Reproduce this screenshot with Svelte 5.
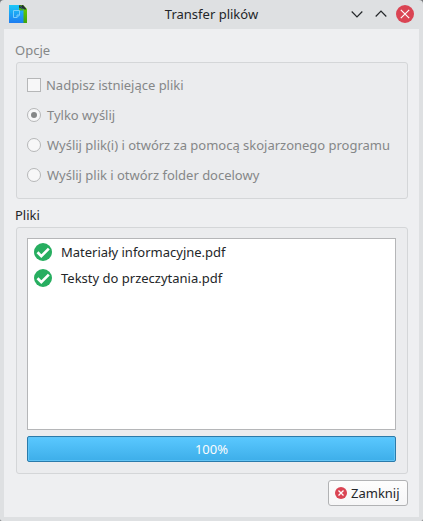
<script>
  const modes = [
    { label: 'Tylko wyślij', selected: true },
    { label: 'Wyślij plik(i) i otwórz za pomocą skojarzonego programu', selected: false },
    { label: 'Wyślij plik i otwórz folder docelowy', selected: false }
  ];
  const files = ['Materiały informacyjne.pdf', 'Teksty do przeczytania.pdf'];
  const progress = 100;
</script>

<div class="window">
  <header>
    <svg class="app" width="18" height="18" viewBox="0 0 18 18">
      <defs>
        <linearGradient id="blue" x1="0" y1="0" x2="0" y2="1">
          <stop offset="0" stop-color="#1bc8f8" />
          <stop offset="1" stop-color="#1d7cf0" />
        </linearGradient>
        <linearGradient id="green" x1="0" y1="0" x2="0" y2="1">
          <stop offset="0" stop-color="#6fd400" />
          <stop offset="1" stop-color="#3fa60a" />
        </linearGradient>
      </defs>
      <path d="M10 0h4l4 4v14h-8z" fill="url(#green)" />
      <path d="M10 0h4l3 3.500v1h-1.500l-1.500-1v1.500z" fill="#263034" />
      <path d="M11 0h2l-.5 1.500z" fill="#58ae0c" />
      <path d="M0 0h10l4.500 4.500V18H0z" fill="url(#blue)" />
      <path d="M10 0l4.500 4.500H10z" fill="#263b42" />
      <path d="M10 2.500l4.500 2v1H10z" fill="#4cae22" />
      <path d="M4.500 5.500h6v4.500l-2.500 2.500H4.500zM8 12.500V10h2.500" fill="none" stroke="#79cdfb" stroke-width="1" />
    </svg>
    <h1>Transfer plików</h1>
    <div class="controls">
      <svg width="14" height="18" viewBox="0 0 14 18"><path d="M1.700 6.500L7 11.800l5.300-5.300" /></svg>
      <svg width="14" height="18" viewBox="0 0 14 18"><path d="M1.700 11.500L7 6.200l5.300 5.300" /></svg>
      <svg width="18" height="18" viewBox="0 0 18 18">
        <circle cx="9" cy="9" r="9" fill="#da4453" />
        <path class="light" d="M4.800 4.800l8.400 8.400M13.200 4.800l-8.400 8.400" />
      </svg>
    </div>
  </header>

  <main>
    <h2 class="muted">Opcje</h2>
    <section class="group options">
      <div class="option first"><span class="check"></span><span>Nadpisz istniejące pliki</span></div>
      {#each modes as mode}
        <div class="option"><span class="radio" class:selected={mode.selected}></span><span>{mode.label}</span></div>
      {/each}
    </section>

    <h2 class="files-title">Pliki</h2>
    <section class="group files">
      <ul>
        {#each files as file}
          <li>
            <svg width="18" height="18" viewBox="0 0 18 18">
              <circle cx="9" cy="9" r="9" fill="#27ae60" />
              <path d="M3.500 9.300l3.800 3.800 7.500-7.500" fill="none" stroke="#fff" stroke-width="2.700" />
            </svg>
            <span>{file}</span>
          </li>
        {/each}
      </ul>
      <div class="progress"><div class="fill" style:width="{progress}%">{progress}%</div></div>
    </section>

    <button>
      <svg width="12" height="12" viewBox="0 0 12 12">
        <circle cx="6" cy="6" r="6" fill="#da4453" />
        <path d="M3.500 3.500l5 5M8.500 3.500l-5 5" stroke="#fff" stroke-width="1.300" />
      </svg>
      <span>Zamknij</span>
    </button>
  </main>
</div>

<style>
  :global(body) { background: #747679; }
  .window {
    width: 423px; height: 521px; box-sizing: border-box;
    padding: 0 4px 4px; border-radius: 4px 4px 2px 2px; background: #dee0e2;
    font: 13px/18px "Noto Sans", sans-serif; color: #232629;
    display: flex; flex-direction: column;
  }
  header { height: 29px; display: grid; grid-template-columns: 70px 1fr 70px; align-items: center; }
  .app { margin-left: 5px; margin-top: -1px; display: block; }
  h1, h2 { font: inherit; margin: 0; }
  h1 { text-align: center; margin-top: -1px; }
  .controls { display: flex; gap: 10px; justify-content: flex-end; padding-right: 5px; margin-top: -1px; }
  .controls svg:nth-child(2) { margin-right: -2px; }
  .controls path { fill: none; stroke: #232629; stroke-width: 1.2; }
  .controls .light { stroke: #fcfcfc; }
  main {
    flex: 1; box-sizing: border-box; background: #eeeff1; padding: 12px 11px 11px 12px;
    display: flex; flex-direction: column;
  }
  h2 { height: 21px; margin-left: -1px; }
  .muted, .options { color: #858788; }
  .files-title { margin-top: 7px; }
  .group { box-sizing: border-box; background: #ebecee; border: 1px solid #d4d6d8; border-radius: 3px; width: 392px; }
  .options { height: 137px; padding: 7px 10px; }
  .option { height: 30px; display: flex; align-items: center; gap: 6px; white-space: nowrap; letter-spacing: -.01px; }
  .option.first { gap: 5px; }
  .check, .radio { flex: none; width: 14px; height: 14px; box-sizing: border-box; border: 1px solid #b6b7b8; background: #f7f7f8; }
  .radio { border-radius: 50%; display: grid; place-items: center; }
  .selected::after { content: ""; width: 6px; height: 6px; border-radius: 50%; background: #858788; }
  .files { height: 247px; padding: 10px; }
  ul {
    margin: 0 0 6px; padding: 0 6px; height: 192px; box-sizing: border-box;
    list-style: none; background: #fff; border: 1px solid #b5b6b8; width: 369px;
  }
  li { height: 26px; display: flex; align-items: center; gap: 9px; }
  li svg { display: block; }
  .progress { height: 26px; width: 369px; }
  .fill {
    height: 26px; box-sizing: border-box; border: 1px solid #2a7bab; border-radius: 2px;
    background: linear-gradient(#5ac8ff, #3daee9); box-shadow: inset 0 0 0 1px #62c4f5;
    text-align: center; line-height: 24px; color: #fcfcfc;
  }
  button {
    width: 80px; height: 26px; margin: 6px 0 0 auto; padding: 0 0 0 6px; box-sizing: border-box;
    border: 1px solid #b1b2b4; border-radius: 3px; background: linear-gradient(#fdfdfd, #f6f6f7);
    font: inherit; color: inherit; display: flex; align-items: center; gap: 4px;
  }
</style>
